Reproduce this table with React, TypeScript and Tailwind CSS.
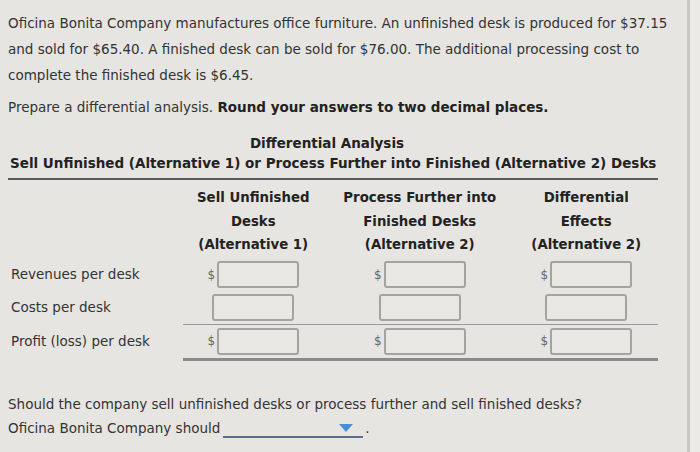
const rows = [
  { label: 'Revenues per desk', dollar: true, h: 'h-[34px]' },
  { label: 'Costs per desk', dollar: false, h: 'h-[32px]' },
  { label: 'Profit (loss) per desk', dollar: true, h: 'h-[33px]' },
];

const headers = [
  ['Sell Unfinished', 'Desks', '(Alternative 1)'],
  ['Process Further into', 'Finished Desks', '(Alternative 2)'],
  ['Differential', 'Effects', '(Alternative 2)'],
];

function Cell({ dollar }: { dollar: boolean }) {
  return (
    <div className="w-[166.5px] shrink-0 flex justify-center items-center">
      {dollar && <span className="text-[12px] text-[#666] mr-[2px]">$</span>}
      <input
        type="text"
        className="w-[82px] h-[27px] rounded-[3px] border-2 border-[#a3a3a0] bg-[#e8e7e3] outline-none"
      />
    </div>
  );
}

export default function App() {
  return (
    <div
      className="w-[700px] h-[452px] flex bg-[#e6e5e1] text-[#333] overflow-hidden"
      style={{ fontFamily: '"DejaVu Sans", Verdana, sans-serif' }}
    >
      <div className="flex-1 pl-[8px] pt-[10px] text-[13.5px]">
        <p className="leading-[26px] w-[670px]">
          Oficina Bonita Company manufactures office furniture. An unfinished desk is produced for $37.15
          and sold for $65.40. A finished desk can be sold for $76.00. The additional processing cost to
          complete the finished desk is $6.45.
        </p>
        <p className="mt-[6px] leading-[26px]">
          Prepare a differential analysis. <b className="text-[#222]">Round your answers to two decimal places.</b>
        </p>

        <div className="w-[672px] mt-[12px]">
          <div className="w-[650px] text-center font-bold text-[#222] leading-[22px] pr-[12px]">Differential Analysis</div>
          <div className="font-bold text-[#222] leading-[20px] pl-[2px] mt-[-1px]">
            Sell Unfinished (Alternative 1) or Process Further into Finished (Alternative 2) Desks
          </div>
          <div className="w-[650px] h-[2px] bg-[#5a5a58] mt-[5px]" />

          <div className="flex mt-[6px] text-[13.3px]">
            <div className="w-[162px] shrink-0" />
            {headers.map((h, i) => (
              <div key={i} className="w-[166.5px] shrink-0 text-center font-bold text-[#222] leading-[23.5px]">
                {h.map((t) => (
                  <div key={t}>{t}</div>
                ))}
              </div>
            ))}
          </div>

          <div className="mt-[1px]">
            {rows.map((r, i) => (
              <div key={r.label}>
                {i === 2 && <div className="ml-[175px] h-[1px] bg-[#999] w-[475px]" />}
                <div className={`flex items-center ${r.h}`}>
                  <div className="w-[162px] shrink-0 pl-[3px]">{r.label}</div>
                  <Cell dollar={r.dollar} />
                  <Cell dollar={r.dollar} />
                  <Cell dollar={r.dollar} />
                </div>
              </div>
            ))}
            <div className="ml-[175px] h-[3px] bg-[#8a8a88] w-[475px]" />
          </div>
        </div>

        <p className="mt-[31px] leading-[24px]">
          Should the company sell unfinished desks or process further and sell finished desks?
        </p>
        <div className="flex items-start leading-[24px]">
          <span>Oficina Bonita Company should</span>
          <div className="ml-[3px] w-[140px] h-[22px] border-b-2 border-[#5f6b8c] flex items-end justify-end pr-[10px] pb-[4px]">
            <svg width="14" height="8" viewBox="0 0 14 8">
              <path d="M0 0 H14 L7 8 Z" fill="#4a8fd6" />
            </svg>
          </div>
          <span className="ml-[2px]">.</span>
        </div>
      </div>
      <div className="w-[13px] border-l-[3px] border-[#c9c8c3] bg-[#ebeae6]" />
    </div>
  );
}
